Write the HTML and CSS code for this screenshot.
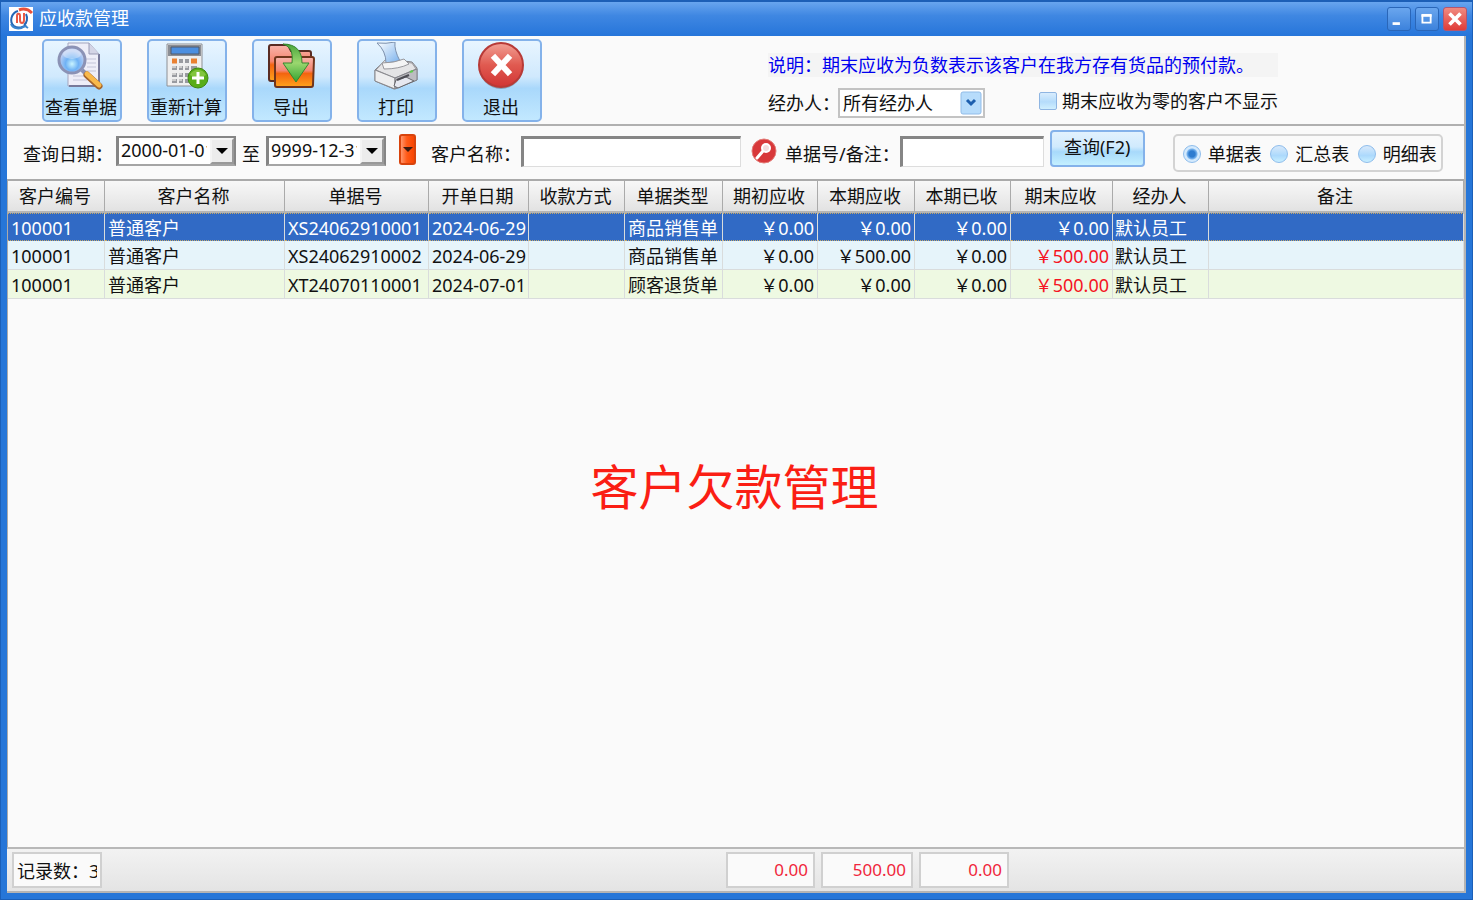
FILE: index.html
```html
<!DOCTYPE html>
<html lang="zh-CN">
<head>
    <meta charset="UTF-8">
    <meta name="viewport" content="width=device-width, initial-scale=1.0">
    <title>应收款管理</title>
    <link rel="stylesheet" href="styles.css">
</head>
<body>

<div class="window">
    <header class="titlebar">
        <svg class="app-icon" viewBox="0 0 24 24">
            <rect width="24" height="24" fill="#fff"/>
            <path d="M9 4C2 6 0 15 5 19c4 3 10 1 12-1" fill="none" stroke="#2467b5" stroke-width="2"/>
            <path d="M2 17c2 5 9 6 14 2l3 2" fill="none" stroke="#3a86cf" stroke-width="2"/>
            <path d="M8 16V9c0-3 3-3 3 0v4c0 4 4 4 4 0V6" fill="none" stroke="#e85a45" stroke-width="2"/>
            <path d="M10 3c5-2 9-1 13 3" fill="none" stroke="#e8503a" stroke-width="3"/>
            <path d="M17 7c2 4 1 9-2 11" fill="none" stroke="#2467b5" stroke-width="2"/>
        </svg>
        <h1>应收款管理</h1>
        <div class="window-buttons">
            <button type="button" aria-label="最小化"><svg viewBox="0 0 24 24"><path d="M5 17h8" stroke="#fff" stroke-width="3"/></svg></button>
            <button type="button" aria-label="最大化"><svg viewBox="0 0 24 24"><path d="M7 8v8h9V8z" fill="none" stroke="#fff" stroke-width="2"/><path d="M6 8h11" stroke="#fff" stroke-width="3"/></svg></button>
            <button type="button" class="close" aria-label="关闭"><svg viewBox="0 0 24 24"><path d="M6 6l12 12M18 6L6 18" stroke="#fff" stroke-width="4"/></svg></button>
        </div>
    </header>

    <main class="content">
        <!-- 工具栏 -->
        <div class="toolbar">
            <div class="tools">
                <button type="button" class="tool">
                    <svg viewBox="0 0 48 48">
                        <defs>
                            <radialGradient id="lens" cx="50%" cy="65%"><stop offset="0" stop-color="#c9f4ff"/><stop offset=".5" stop-color="#6fb2f5"/><stop offset="1" stop-color="#b9cdf3"/></radialGradient>
                        </defs>
                        <path d="M11 1h21l10 11v32H11z" fill="#eeeef8" stroke="#a4a5bd"/>
                        <path d="M42 12v32H12" fill="none" stroke="#77799a" stroke-width="2"/>
                        <path d="M32 1v11h10" fill="#d4d5e6" stroke="#9a9bb5"/>
                        <path d="M28 17h11M30 21h9M30 25h9M28 29h11M16 34h14M16 38h14" stroke="#c3c4d8"/>
                        <circle cx="15" cy="18" r="13" fill="url(#lens)" stroke="#8b92b5" stroke-width="3"/>
                        <ellipse cx="15" cy="12" rx="9" ry="5" fill="#fff" opacity=".35"/>
                        <path d="M25 28l4 4" stroke="#8b92b5" stroke-width="4"/>
                        <path d="M30 33l12 11" stroke="#a5642a" stroke-width="7" stroke-linecap="round"/>
                        <path d="M30 32l12 11" stroke="#f8b94b" stroke-width="5" stroke-linecap="round"/>
                    </svg>
                    <span>查看单据</span>
                </button>
                <button type="button" class="tool">
                    <svg viewBox="0 0 48 48">
                        <path d="M5 2h35v42H5z" fill="#efefef" stroke="#8d9095"/>
                        <path d="M6 3h33v11H6z" fill="#8b8e94"/>
                        <path d="M9 5h28v7H9z" fill="#4c8fe0" stroke="#4f596b"/>
                        <path d="M10 19h5M29 19h6" stroke="#e98132" stroke-width="5"/>
                        <path d="M17 19h4M23 19h4M10 26h5M17 26h4M23 26h4M29 26h6M10 33h5M17 33h4M23 33h4M10 39h5M17 39h4M23 39h4" stroke="#999ba0" stroke-width="4"/>
                        <path d="M10 25h4M17 25h3M23 25h3M10 32h4M17 32h3M10 38h4M17 38h3" stroke="#ccc" stroke-width="2"/>
                        <circle cx="36" cy="36" r="10" fill="#58ad18" stroke="#3c8710"/>
                        <path d="M28 33a9 9 0 0 1 16 0q-8 5-16 0" fill="#93cf4d" opacity=".7"/>
                        <path d="M36 30v12M30 36h12" stroke="#fff" stroke-width="3"/>
                    </svg>
                    <span>重新计算</span>
                </button>
                <button type="button" class="tool">
                    <svg viewBox="0 0 48 48">
                        <defs>
                            <linearGradient id="folder" x2="0" y2="1"><stop offset="0" stop-color="#f9b5ac"/><stop offset=".45" stop-color="#f58670"/><stop offset=".55" stop-color="#f4640f"/><stop offset="1" stop-color="#ffa41c"/></linearGradient>
                            <linearGradient id="arrow" x2="0" y2="1"><stop offset="0" stop-color="#48a53b"/><stop offset=".5" stop-color="#9bd76f"/><stop offset="1" stop-color="#32a331"/></linearGradient>
                        </defs>
                        <path d="M2 5q0-2 2-2h17l3 6h18q2 0 2 2v28H4q-2 0-2-2z" fill="url(#folder)" stroke="#592c23" stroke-width="2"/>
                        <path d="M8 17q0-2 2-2h35q2 0 2 2l-1 26q0 2-2 2H10q-2 0-2-2z" fill="url(#folder)" stroke="#70351c" stroke-width="2"/>
                        <path d="M16 2c14 0 19 8 19 19h7L29 40 16 21h9c1-11-1-16-9-19z" fill="url(#arrow)" stroke="#37862f"/>
                    </svg>
                    <span>导出</span>
                </button>
                <button type="button" class="tool">
                    <svg viewBox="0 0 48 48">
                        <defs>
                            <linearGradient id="paper" x2="1" y2="1"><stop offset="0" stop-color="#fff"/><stop offset="1" stop-color="#79b1ed"/></linearGradient>
                        </defs>
                        <path d="M5 26l10-9 25 3 5 6v12L22 47 3 39V28z" fill="#c7c7ca" stroke="#818187"/>
                        <path d="M4 28l9-10 27 3 4 6-21 9z" fill="#e4e4e6" stroke="#9b9ba0"/>
                        <path d="M3 28l20 8v11L3 39z" fill="#eeeeef" stroke="#88888d"/>
                        <path d="M23 36l22-9v11l-22 9z" fill="#bcbcc1" stroke="#828289"/>
                        <path d="M5 1q9 1 18-1-1 8 5 19l-14 2Q14 9 5 1z" fill="url(#paper)" stroke="#7e91ad"/>
                        <path d="M10 21q12 0 22-4l5 5q-10 5-25 5z" fill="#f4f4f5" stroke="#98989d"/>
                        <path d="M24 38l10-3 8 4-16 7-4-2z" fill="#e6e8f0" stroke="#66666b"/>
                        <path d="M25 38l12-5" stroke="#4d4d55" stroke-width="2"/>
                        <path d="M38 30l3-1" stroke="#5fcb4e" stroke-width="2"/>
                    </svg>
                    <span>打印</span>
                </button>
                <button type="button" class="tool">
                    <svg viewBox="0 0 48 48">
                        <defs>
                            <linearGradient id="exit" x2="0" y2="1"><stop offset="0" stop-color="#f2a095"/><stop offset=".5" stop-color="#e05a50"/><stop offset="1" stop-color="#d13535"/></linearGradient>
                        </defs>
                        <circle cx="24" cy="25" r="22" fill="#606570" opacity=".5"/>
                        <circle cx="24" cy="23" r="22" fill="url(#exit)" stroke="#b83a37" stroke-width="2"/>
                        <path d="M18 16l13 14M31 16L18 30" stroke="#fff" stroke-width="6" stroke-linecap="square"/>
                    </svg>
                    <span>退出</span>
                </button>
            </div>
            <div class="options">
                <p class="note">说明：期末应收为负数表示该客户在我方存有货品的预付款。</p>
                <div class="option-row">
                    <label for="handler">经办人：</label>
                    <div class="select-box">
                        <select id="handler">
                            <option>所有经办人</option>
                        </select>
                        <svg viewBox="0 0 22 24"><rect x="1" y="1" width="20" height="22" rx="2" fill="#b7dcfb" stroke="#91bce8"/><path d="M7 9l4 4 4-4" fill="none" stroke="#1d5fae" stroke-width="3"/></svg>
                    </div>
                    <label class="check"><input type="checkbox">期末应收为零的客户不显示</label>
                </div>
            </div>
        </div>

        <!-- 查询条件 -->
        <form class="filter">
            <label for="dateFrom">查询日期：</label>
            <div class="date-box">
                <input type="text" id="dateFrom" value="2000-01-01">
                <button type="button" aria-label="选择开始日期"></button>
            </div>
            <label for="dateTo" class="to">至</label>
            <div class="date-box">
                <input type="text" id="dateTo" value="9999-12-31">
                <button type="button" aria-label="选择结束日期"></button>
            </div>
            <button type="button" class="date-menu" aria-label="日期范围"></button>
            <label for="customer">客户名称：</label>
            <input type="text" id="customer" class="field customer">
            <button type="button" class="find" aria-label="查找客户">
                <svg viewBox="0 0 26 26"><circle cx="13" cy="13" r="12" fill="#d8383a" stroke="#e37c78"/><circle cx="15" cy="10" r="5" fill="#fff"/><path d="M12 13l-6 7" stroke="#fff" stroke-width="3" stroke-linecap="round"/><circle cx="15" cy="10" r="3" fill="#f3dcdc"/></svg>
            </button>
            <label for="remark">单据号/备注：</label>
            <input type="text" id="remark" class="field remark">
            <button type="button" class="query">查询(F2)</button>
            <div class="views" role="radiogroup" aria-label="报表类型">
                <label><input type="radio" name="view" checked>单据表</label>
                <label><input type="radio" name="view">汇总表</label>
                <label><input type="radio" name="view">明细表</label>
            </div>
        </form>

        <!-- 单据列表 -->
        <div class="grid">
            <table>
                <colgroup>
                    <col class="w-code"><col class="w-name"><col class="w-bill"><col class="w-date"><col class="w-mid"><col class="w-type"><col class="w-first"><col class="w-sum"><col class="w-mid"><col class="w-end"><col class="w-mid"><col>
                </colgroup>
                <thead>
                    <tr><th>客户编号</th><th>客户名称</th><th>单据号</th><th>开单日期</th><th>收款方式</th><th>单据类型</th><th>期初应收</th><th>本期应收</th><th>本期已收</th><th>期末应收</th><th>经办人</th><th>备注</th></tr>
                </thead>
                <tbody>
                    <tr class="selected"><td>100001</td><td>普通客户</td><td>XS24062910001</td><td>2024-06-29</td><td></td><td>商品销售单</td><td class="money">￥0.00</td><td class="money">￥0.00</td><td class="money">￥0.00</td><td class="money">￥0.00</td><td>默认员工</td><td></td></tr>
                    <tr><td>100001</td><td>普通客户</td><td>XS24062910002</td><td>2024-06-29</td><td></td><td>商品销售单</td><td class="money">￥0.00</td><td class="money">￥500.00</td><td class="money">￥0.00</td><td class="money due">￥500.00</td><td>默认员工</td><td></td></tr>
                    <tr><td>100001</td><td>普通客户</td><td>XT24070110001</td><td>2024-07-01</td><td></td><td>顾客退货单</td><td class="money">￥0.00</td><td class="money">￥0.00</td><td class="money">￥0.00</td><td class="money due">￥500.00</td><td>默认员工</td><td></td></tr>
                </tbody>
            </table>
            <p class="caption">客户欠款管理</p>
        </div>

        <footer class="statusbar">
            <div class="count"><span>记录数：3</span></div>
            <output class="first">0.00</output>
            <output class="second">500.00</output>
            <output>0.00</output>
        </footer>
    </main>
</div>

</body>
</html>
```
FILE: styles.css
```css
* {
    box-sizing: border-box;
}

body {
    margin: 0;
    font-family: "Noto Sans", "Noto Sans CJK SC", sans-serif;
    font-size: 18px;
    line-height: 24px;
    color: #111;
}

button, input, select {
    font: inherit;
    color: inherit;
    margin: 0;
    padding: 0;
}

label {
    white-space: nowrap;
}

.window {
    display: flex;
    flex-direction: column;
    height: 100vh;
    padding: 0 6px 6px;
    background: #2676d8;
    border: 1px solid #1b5fb8;
    border-top: 2px solid #1c5fb7;
}

/* 标题栏 */
.titlebar {
    display: flex;
    align-items: center;
    flex: none;
    height: 34px;
    margin: 0 -6px;
    padding: 0 5px 0 8px;
    background: linear-gradient(#68a5ef, #3f87e2 40%, #2675da);
}

.app-icon {
    width: 24px;
    height: 24px;
}

.titlebar h1 {
    margin: 0 0 3px 6px;
    font-size: 18px;
    font-weight: normal;
    color: #fff;
}

.window-buttons {
    display: flex;
    gap: 4px;
    margin-left: auto;
}

.window-buttons button {
    width: 24px;
    height: 24px;
    border: 1px solid #2a66b8;
    border-radius: 3px;
    background: linear-gradient(#6aa6ee, #3c82dc);
}

.window-buttons .close {
    border-color: #b4566f;
    background: linear-gradient(#f08a80, #e03c38);
}

.window-buttons svg {
    display: block;
}

.content {
    display: flex;
    flex-direction: column;
    flex: 1;
    min-height: 0;
    background: #fafafa;
    border-right: 2px solid #b4b4b4;
    border-bottom: 2px solid #b4b4b4;
}

/* 工具栏 */
.toolbar {
    display: flex;
    flex: none;
    height: 90px;
    padding: 3px 0 0 35px;
    border-bottom: 2px solid #b0b0b0;
}

.tools {
    display: flex;
    gap: 25px;
}

.tool {
    display: flex;
    flex-direction: column;
    align-items: center;
    justify-content: space-between;
    width: 80px;
    height: 83px;
    padding: 1px 2px 1px 0;
    border: 2px solid #84b2ea;
    border-radius: 5px;
    background: linear-gradient(#e8f5ff, #d0e9fd 45%, #a9d8fb 60%, #c2e8ff);
    white-space: nowrap;
}

.tool svg {
    width: 48px;
    height: 48px;
}

.options {
    margin-left: 226px;
    padding-top: 14px;
}

.note {
    margin: 0 0 11px;
    background: #f4f4f4;
    color: #0000f0;
}

.option-row {
    display: flex;
    align-items: center;
    height: 30px;
}

.select-box {
    position: relative;
    width: 147px;
    margin: 0 54px 0 -2px;
}

.select-box select {
    display: block;
    width: 100%;
    height: 30px;
    padding-left: 3px;
    border: 2px solid #c3c3c3;
    background: #fff;
    appearance: none;
}

.select-box svg {
    position: absolute;
    top: 3px;
    right: 3px;
    width: 22px;
    height: 24px;
    pointer-events: none;
}

.check {
    display: flex;
    align-items: center;
    gap: 5px;
    margin-bottom: 4px;
}

.check input {
    width: 18px;
    height: 18px;
    border: 1px solid #8eb5e2;
    border-radius: 2px;
    background: linear-gradient(#d8ecfd, #b5dcfb 55%, #d0effe);
    appearance: none;
}

/* 查询条件 */
.filter {
    display: flex;
    align-items: center;
    flex: none;
    height: 53px;
    padding: 0 0 3px 16px;
}

.filter > label {
    padding-top: 5px;
}

.date-box {
    display: flex;
    width: 120px;
    height: 30px;
    margin-left: 3px;
    border: 2px solid #858585;
    border-left-width: 3px;
    border-bottom-color: #a5a5a5;
    background: #fff;
}

.date-box input {
    flex: 1;
    min-width: 0;
    margin: 0 3px 2px 2px;
    border: 0;
    outline: 0;
    background: none;
}

.date-box button {
    display: flex;
    align-items: center;
    justify-content: center;
    width: 24px;
    border: 2px solid #f4f4f4;
    border-right-color: #999;
    border-bottom-color: #999;
    background: #ececec;
}

.date-box button::before,
.date-menu::before {
    content: "";
    border: 6px solid transparent;
    border-top-color: #000;
    border-bottom: 0;
}

.to {
    margin: 0 3px 0 6px;
}

.date-menu {
    display: flex;
    align-items: center;
    justify-content: center;
    width: 17px;
    height: 31px;
    margin: 0 15px 4px 13px;
    border: 2px solid #d8430c;
    border-radius: 3px;
    background: linear-gradient(90deg, #ff946a, #ff5a18 45%, #f84400);
}

.date-menu::before {
    border-width: 5px 5px 0;
    border-top-color: #3d1b10;
}

.field {
    height: 31px;
    border: 1px solid #ddd;
    border-top: 3px solid #858585;
    border-left: 3px solid #858585;
    background: #fff;
    outline: 0;
}

.customer {
    width: 220px;
}

.find {
    width: 26px;
    height: 26px;
    margin: 0 8px 0 10px;
    border: 0;
    background: none;
}

.find svg {
    display: block;
}

.remark {
    width: 144px;
}

.query {
    width: 95px;
    height: 37px;
    margin: 0 28px 6px 6px;
    padding-bottom: 2px;
    border: 2px solid #84b2ea;
    border-radius: 4px;
    background: linear-gradient(#e2f2fe, #d0eafd 45%, #a7d9fb 60%, #c4f0ff);
}

.views {
    display: flex;
    align-items: center;
    justify-content: space-between;
    width: 270px;
    height: 38px;
    margin-top: 4px;
    padding: 2px 4px 0 8px;
    border: 2px solid #d3d3d3;
    border-radius: 5px;
}

.views label {
    display: flex;
    align-items: center;
    gap: 7px;
}

.views input {
    width: 18px;
    height: 18px;
    border: 1px solid #8ebdec;
    border-radius: 50%;
    background: linear-gradient(#d8e9fb, #acd9fc 60%, #c8efff);
    appearance: none;
}

.views input:checked {
    background: radial-gradient(#2e7cd0 0 3px, #79b4ee 5px, #d4eafd 6px);
}

/* 表格 */
.grid {
    position: relative;
    flex: 1;
    min-height: 0;
    border-top: 2px solid #aaa;
    border-left: 1px solid #aaa;
}

.grid table {
    width: 100%;
    border-collapse: separate;
    border-spacing: 0;
    table-layout: fixed;
}

.w-code { width: 97px; }
.w-name { width: 180px; }
.w-bill { width: 144px; }
.w-date { width: 100px; }
.w-mid { width: 96px; }
.w-type { width: 98px; }
.w-first { width: 95px; }
.w-sum { width: 97px; }
.w-end { width: 102px; }

.grid th {
    height: 32px;
    padding: 0 2px 0 0;
    border-right: 1px solid #aaa;
    border-bottom: 2px solid #b5b5b5;
    background: linear-gradient(#f8f8f8, #e2e2e2);
    font-weight: normal;
    white-space: nowrap;
}

.grid td {
    height: 29px;
    padding: 1px 3px 0;
    border-right: 1px solid #d9dcdc;
    border-bottom: 1px solid #d9dcdc;
    background: #e6f4fa;
    overflow: hidden;
    white-space: nowrap;
}

.grid td:nth-child(11) {
    padding-left: 2px;
}

.grid tr:last-child td {
    background: #eef9e2;
}

.grid .selected td {
    height: 28px;
    border-top: 1px dotted #c5a867;
    border-bottom: 1px dotted #c5a867;
    background: #316ac5;
    color: #fff;
}

.grid .money {
    text-align: right;
}

.grid .due {
    color: #f51423;
}

.caption {
    position: absolute;
    top: 42%;
    left: 0;
    right: 3px;
    margin: 0;
    font-size: 48px;
    line-height: 52px;
    text-align: center;
    color: #fa1e14;
}

/* 状态栏 */
.statusbar {
    display: flex;
    align-items: center;
    flex: none;
    height: 44px;
    padding-left: 5px;
    border-top: 2px solid #b8b8b8;
    background: linear-gradient(#f2f2f2, #e4e4e4);
}

.count, .statusbar output {
    height: 36px;
    border: 2px solid #d0d0d0;
    background: #fafafa;
    line-height: 34px;
}

.count {
    width: 90px;
    padding: 0 3px;
}

.count span {
    display: block;
    overflow: hidden;
    white-space: nowrap;
}

.statusbar output {
    width: 90px;
    margin-left: 6px;
    padding-right: 5px;
    font-size: 17px;
    line-height: 32px;
    text-align: right;
    color: #f0263c;
}

.statusbar .first {
    width: 89px;
    margin-left: 624px;
}

.statusbar .second {
    width: 92px;
}
```
